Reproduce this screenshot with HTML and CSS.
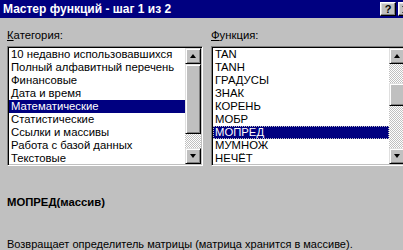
FILE: index.html
```html
<!DOCTYPE html>
<html lang="ru">

<head>
    <meta charset="UTF-8">
    <meta name="viewport" content="width=device-width, initial-scale=1.0">
    <title>Мастер функций</title>
    <link rel="stylesheet" href="styles.css">
</head>

<body>
    <div class="window">
        <div class="titlebar">
            <span class="title">Мастер функций - шаг 1 из 2</span>
            <div class="title-buttons">
                <span class="tbtn">?</span>
                <span class="tbtn">
                    <svg width="8" height="7" viewBox="0 0 8 7">
                        <path d="M0 0h2l2 2 2-2h2L5 3.5 8 7H6L4 5 2 7H0l3-3.5z" fill="#000"/>
                    </svg>
                </span>
            </div>
        </div>

        <div class="lists">
            <div class="field">
                <label class="caption"><u>К</u>атегория:</label>
                <div class="listbox">
                    <ul class="items">
                        <li>10 недавно использовавшихся</li>
                        <li>Полный алфавитный перечень</li>
                        <li>Финансовые</li>
                        <li>Дата и время</li>
                        <li class="selected">Математические</li>
                        <li>Статистические</li>
                        <li>Ссылки и массивы</li>
                        <li>Работа с базой данных</li>
                        <li>Текстовые</li>
                    </ul>
                    <div class="scrollbar">
                        <div class="sbtn"><span class="arrow up"></span></div>
                        <div class="track">
                            <div class="thumb thumb-cat"></div>
                        </div>
                        <div class="sbtn"><span class="arrow down"></span></div>
                    </div>
                </div>
            </div>

            <div class="field">
                <label class="caption"><u>Ф</u>ункция:</label>
                <div class="listbox">
                    <ul class="items">
                        <li>TAN</li>
                        <li>TANH</li>
                        <li>ГРАДУСЫ</li>
                        <li>ЗНАК</li>
                        <li>КОРЕНЬ</li>
                        <li>МОБР</li>
                        <li class="selected focused">МОПРЕД</li>
                        <li>МУМНОЖ</li>
                        <li>НЕЧЁТ</li>
                    </ul>
                    <div class="scrollbar">
                        <div class="sbtn"><span class="arrow up"></span></div>
                        <div class="track">
                            <div class="thumb thumb-fn"></div>
                        </div>
                        <div class="sbtn"><span class="arrow down"></span></div>
                    </div>
                </div>
            </div>
        </div>

        <div class="signature">МОПРЕД(массив)</div>
        <div class="description">Возвращает определитель матрицы (матрица хранится в массиве).</div>
    </div>
</body>

</html>
```

FILE: styles.css
```css
/* General Styles */
html, body {
    margin: 0;
    overflow: hidden;
}

body {
    font-family: "Liberation Sans", Arial, sans-serif;
    font-size: 11.3px;
    color: #000;
    background-color: #c0c0c0;
}

.window {
    width: 418px;
    height: 250px;
    background-color: #c0c0c0;
}

/* Title bar */
.titlebar {
    height: 18px;
    background-color: #000080;
    color: #fff;
    display: flex;
    align-items: center;
    justify-content: space-between;
    padding: 0 4px 0 3px;
}

.title {
    font-weight: bold;
    font-size: 12px;
}

.title-buttons {
    display: flex;
    gap: 2px;
}

.tbtn {
    width: 12px;
    height: 10px;
    display: flex;
    align-items: center;
    justify-content: center;
    background-color: #c0c0c0;
    color: #000;
    font-weight: bold;
    font-size: 11px;
    line-height: 10px;
    border-top: 1px solid #fff;
    border-left: 1px solid #fff;
    border-right: 1px solid #000;
    border-bottom: 1px solid #000;
    box-shadow: inset -1px -1px 0 #808080, inset 1px 1px 0 #dfdfdf;
    padding: 1px;
}

/* Lists */
.lists {
    display: flex;
    gap: 8px;
    padding: 11px 0 0 7px;
}

.field {
    width: 196px;
}

.caption {
    display: block;
    height: 13px;
    line-height: 13px;
    margin-bottom: 4px;
}

.listbox {
    height: 116px;
    display: flex;
    background-color: #fff;
    border-top: 1px solid #808080;
    border-left: 1px solid #808080;
    border-right: 1px solid #fff;
    border-bottom: 1px solid #fff;
    box-shadow: inset 1px 1px 0 #000, inset -1px -1px 0 #c0c0c0;
    padding: 1px;
    overflow: hidden;
}

.items {
    list-style: none;
    margin: 0;
    padding: 0;
    flex: 1;
    overflow: hidden;
}

.items li {
    height: 13px;
    line-height: 13px;
    padding-left: 2px;
    white-space: nowrap;
}

.items li.selected {
    background-color: #000080;
    color: #fff;
}

.items li.focused {
    outline: 1px dotted #c0c0c0;
    outline-offset: -1px;
}

/* Scrollbar */
.scrollbar {
    width: 16px;
    display: flex;
    flex-direction: column;
}

.sbtn, .thumb {
    box-sizing: border-box;
    background-color: #c0c0c0;
    border-top: 1px solid #dfdfdf;
    border-left: 1px solid #dfdfdf;
    border-right: 1px solid #000;
    border-bottom: 1px solid #000;
    box-shadow: inset 1px 1px 0 #fff, inset -1px -1px 0 #808080;
}

.sbtn {
    height: 16px;
    display: flex;
    align-items: center;
    justify-content: center;
}

.arrow {
    width: 0;
    height: 0;
    border-left: 3.5px solid transparent;
    border-right: 3.5px solid transparent;
}

.arrow.up {
    border-bottom: 4px solid #000;
}

.arrow.down {
    border-top: 4px solid #000;
}

.track {
    flex: 1;
    background: repeating-conic-gradient(#c0c0c0 0 25%, #fff 0 50%) 0 0 / 2px 2px;
}

.thumb-cat {
    height: 70px;
}

.thumb-fn {
    height: 23px;
    margin-top: 19px;
}

/* Description */
.signature {
    font-weight: bold;
    padding: 30px 0 0 7px;
    line-height: 13px;
}

.description {
    font-size: 11px;
    padding: 29px 0 0 7px;
    line-height: 13px;
}
```
